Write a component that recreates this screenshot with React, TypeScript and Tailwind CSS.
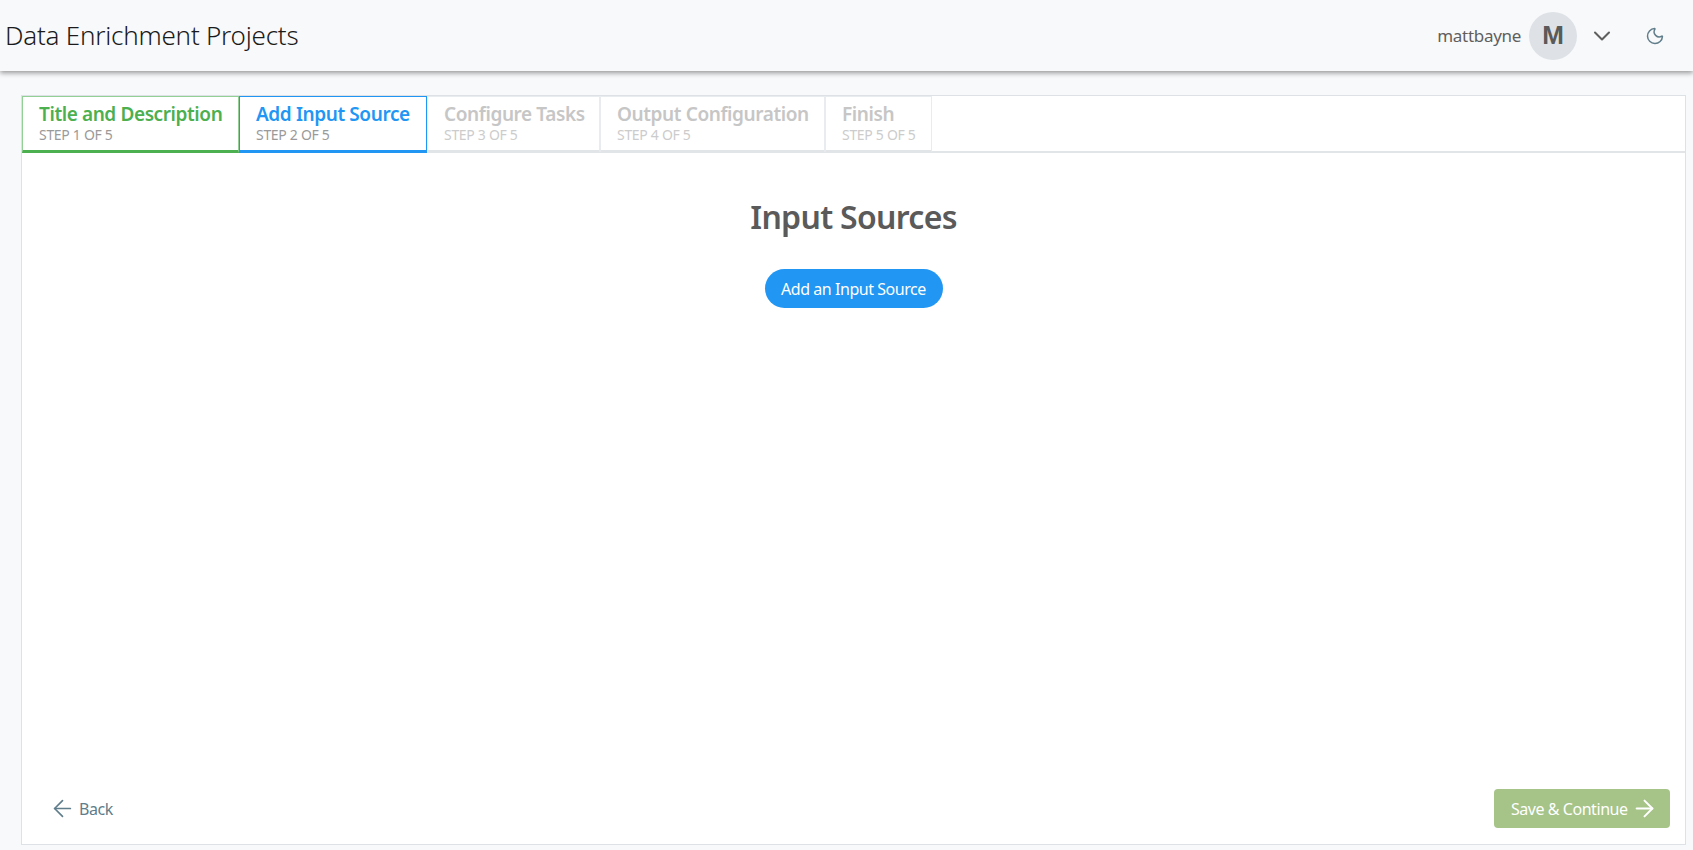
import { ArrowLeft, ArrowRight, ChevronDown, Moon } from "lucide-react";

const STEPS = [
  { title: "Title and Description", sub: "STEP 1 OF 5", width: "w-[217px]", box: "border-x border-t border-[#93d096] border-b-[3px] border-b-[#4caf50]", titleColor: "text-[#4caf50]", subColor: "text-[#9a9a9a]" },
  { title: "Add Input Source", sub: "STEP 2 OF 5", width: "w-[188px]", box: "border-x border-t border-[#2196f3] border-b-[3px] border-b-[#2196f3]", titleColor: "text-[#2196f3]", subColor: "text-[#9a9a9a]" },
  { title: "Configure Tasks", sub: "STEP 3 OF 5", width: "w-[173px]", box: "border-x border-t border-[#e9ecef] border-b-[3px] border-b-[#e2e5e8]", titleColor: "text-[#c6c6c6]", subColor: "text-[#cccccc]" },
  { title: "Output Configuration", sub: "STEP 4 OF 5", width: "w-[225px]", box: "border-x border-t border-[#e9ecef] border-b-[3px] border-b-[#e2e5e8]", titleColor: "text-[#c6c6c6]", subColor: "text-[#cccccc]" },
  { title: "Finish", sub: "STEP 5 OF 5", width: "w-[107px]", box: "border-x border-t border-[#e9ecef] border-b-[3px] border-b-[#e2e5e8]", titleColor: "text-[#c6c6c6]", subColor: "text-[#cccccc]" },
];

export default function App() {
  return (
    <div className="flex h-[850px] flex-col overflow-hidden bg-[#f8f9fa] font-['Noto_Sans',sans-serif]">
      {/* top bar */}
      <header className="relative flex h-[71px] shrink-0 items-center justify-between bg-[#f8f9fa] pl-[5px] pr-[28px] shadow-[0_2px_5px_rgba(0,0,0,0.4)]">
        <h1 className="text-[26px] font-light tracking-[-0.23px] text-[#1b1b1b]">Data Enrichment Projects</h1>
        <div className="flex items-center">
          <span className="text-[17px] tracking-[-0.3px] text-[#5f5f5f]">mattbayne</span>
          <div className="ml-2 flex size-12 items-center justify-center rounded-full bg-[#dee2e6] font-['Liberation_Sans',sans-serif] text-[26px] font-bold text-[#5a5a5a]">
            M
          </div>
          <ChevronDown className="ml-[11px] size-7 text-[#5f5f5f]" strokeWidth={1.75} />
          <Moon className="ml-[29px] size-5 text-[#607d8b]" strokeWidth={1.75} />
        </div>
      </header>

      {/* wizard panel */}
      <main className="mb-[5px] ml-[21px] mr-[7px] mt-[24px] flex flex-1 flex-col border border-[#dee2e6] bg-white">
        <div className="flex h-[57px] shrink-0 border-b-2 border-[#e2e5e8]">
          {STEPS.map((step) => (
            <div key={step.title} className={`${step.width} ${step.box} -mb-[2px] h-[57px] pl-[16px] pt-[5px]`}>
              <div className={`text-[19px] font-semibold leading-[24px] tracking-[-0.4px] ${step.titleColor}`}>{step.title}</div>
              <div className={`text-[14px] leading-[18px] tracking-[-0.3px] ${step.subColor}`}>{step.sub}</div>
            </div>
          ))}
        </div>

        <div className="flex flex-1 flex-col items-center pt-[43px]">
          <h2 className="text-[32px] font-semibold leading-[42px] tracking-[-0.7px] text-[#5a5a5a]">Input Sources</h2>
          <button className="mt-[31px] h-[39px] w-[178px] rounded-full bg-[#2196f3] text-base tracking-[-0.45px] text-white">
            Add an Input Source
          </button>
        </div>

        <div className="flex items-center justify-between pb-[16px] pl-[27px] pr-[15px]">
          <button className="flex items-center gap-[3px] text-base tracking-[-0.45px] text-[#607d8b]">
            <ArrowLeft className="size-[27px]" strokeWidth={1.5} />
            Back
          </button>
          <button className="flex h-[39px] w-[176px] items-center gap-[3px] rounded bg-[#a6c388] pl-[17px] text-base tracking-[-0.45px] text-white">
            Save &amp; Continue
            <ArrowRight className="size-[27px]" strokeWidth={1.75} />
          </button>
        </div>
      </main>
    </div>
  );
}
